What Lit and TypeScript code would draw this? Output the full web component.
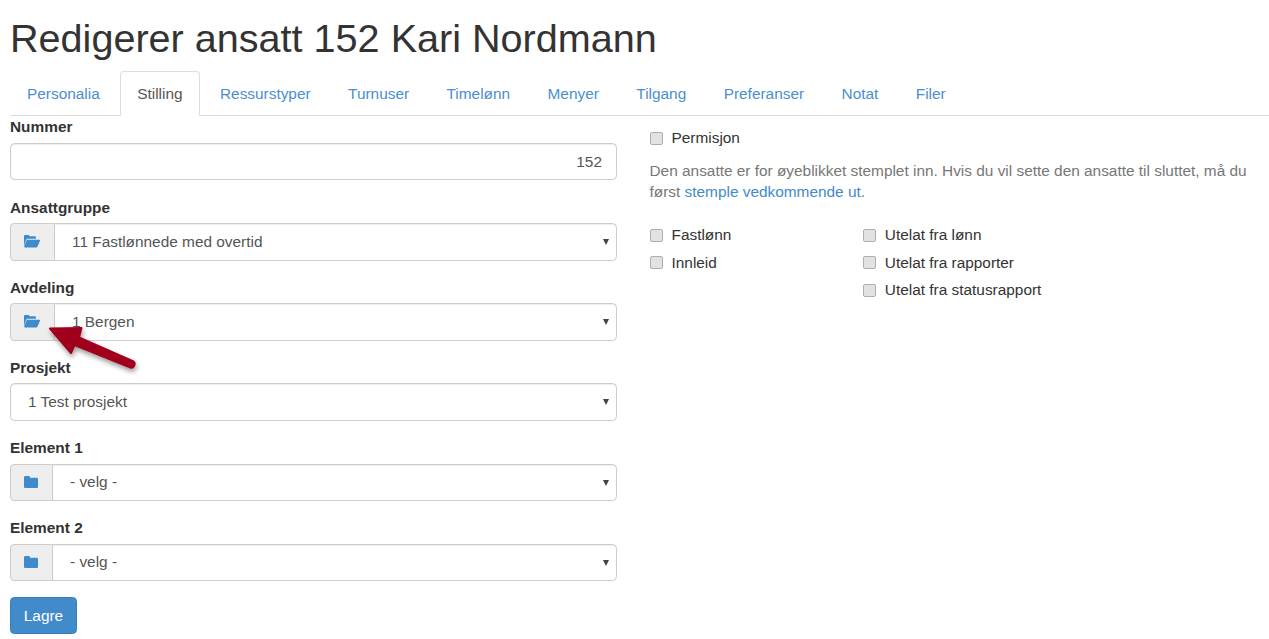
import { LitElement, html, css, svg } from "lit";
import { customElement } from "lit/decorators.js";

const openIcon = html`<svg class="ico open" viewBox="0 0 16 12.500" preserveAspectRatio="none"><path d="M0 10.6V1.2C0 .6.5.1 1.1.1h3.2c.6 0 1 .4 1.1 1h5.5c.6 0 1 .4 1 1V3.600H3.700C3 3.600 2.500 4 2.200 4.600zM3.500 4.600h11.800c.6 0 .9.5.7 1l-2.300 5.300c-.2.6-.7 1-1.300 1H.9c-.5 0-.8-.5-.6-1l2-5.200c.2-.6.7-1.100 1.200-1.100z"/></svg>`;
const closedIcon = html`<svg class="ico closed" viewBox="0 0 14 12"><path d="M1.300 0h3.400c.7 0 1.200.5 1.300 1.200l.1.500h6.600c.7 0 1.300.6 1.300 1.300v7.700c0 .7-.6 1.300-1.300 1.300H1.300C.6 12 0 11.400 0 10.700V1.300C0 .6.600 0 1.300 0z"/></svg>`;

@customElement("app-root")
export class AppRoot extends LitElement {
  static styles = css`
    :host { display: block; font-family: "Liberation Sans", Arial, sans-serif; font-size: 15.4px; line-height: 22px; color: #333; padding: 0 0 0 10px; position: relative; height: 639px; overflow: hidden; box-sizing: border-box; }
    * { box-sizing: border-box; }
    h1 { margin: 0; padding-top: 16px; height: 71px; font-size: 39.6px; line-height: 44px; font-weight: 400; }
    .tabs { display: flex; height: 45px; border-bottom: 1px solid #ddd; padding: 0; margin: 0; list-style: none; }
    .tab { padding: 11px 16px; height: 45px; color: #4a8fd0; margin-right: 3.450px; border: 1px solid transparent; border-radius: 4px 4px 0 0; white-space: nowrap; }
    .tab.active { color: #555; background: #fff; border-color: #ddd; border-bottom-color: #fff; }
    .cols { display: flex; }
    .left { width: 607px; flex: none; }
    .right { flex: 1; margin-left: 32.500px; padding-top: 11px; }
    label.f { display: block; font-weight: 700; line-height: 22px; margin-bottom: 4.500px; }
    .fg:first-child label.f { margin-bottom: 5px; }
    .fg { margin-bottom: 16.250px; }
    .ctl { display: block; width: 100%; height: 37.4px; border: 1px solid #ccc; border-radius: 4.400px; padding: 6px 14px; font: inherit; color: #555; background: #fff; box-shadow: inset 0 1px 1px rgba(0,0,0,.075); outline: none; }
    input.ctl { text-align: right; }
    select.ctl { appearance: none; -webkit-appearance: none; padding: 6px 24px 6px 17px; }
    .sw { position: relative; flex: 1; min-width: 0; }
    .sw::after { content: ""; position: absolute; right: 8px; top: 16px; border-style: solid; border-width: 6px 3px 0; border-color: #444 transparent transparent; }
    .ig { display: flex; }
    .addon { flex: none; display: flex; align-items: center; justify-content: center; height: 37.4px; padding-right: 1px; background: #eee; border: 1px solid #ccc; border-right: 0; border-radius: 4.400px 0 0 4.400px; }
    .addon.o { width: 44px; }
    .addon.c { width: 42px; }
    .ig .ctl { border-radius: 0 4.400px 4.400px 0; }
    .ico { fill: #428bca; display: block; }
    .ico.open { width: 16px; height: 13px; }
    .ico.closed { width: 14px; height: 12px; }
    .btn { display: block; height: 37px; width: 67px; font: inherit; color: #fff; background: #428bca; border: 1px solid #357ebd; border-radius: 4.400px; padding: 1px 0 0; }
    .ck { display: flex; align-items: center; height: 22px; margin: 0; font-weight: 400; }
    .ck input { appearance: none; -webkit-appearance: none; width: 13px; height: 13px; margin: 0 9px 0 0; flex: none; background: #e2e2e2; border: 1px solid #aeaeae; border-radius: 2px; }
    p { margin: 11px 0 0; color: #777; line-height: 21px; }
    a { color: #428bca; text-decoration: none; }
    .grid { display: flex; margin-top: 22px; }
    .gc { width: 213.300px; display: flex; flex-direction: column; gap: 5.700px; }
    .arrow { position: absolute; left: 40px; top: 320px; width: 105px; height: 60px; overflow: visible; }
  `;

  private field(name: string, value: string, icon?: "o" | "c") {
    const sel = html`<div class="sw"><select class="ctl"><option>${value}</option></select></div>`;
    return html`<div class="fg"><label class="f">${name}</label>
      ${icon
        ? html`<div class="ig"><span class="addon ${icon}">${icon === "o" ? openIcon : closedIcon}</span>${sel}</div>`
        : sel}</div>`;
  }

  private ck(t: string) {
    return html`<label class="ck"><input type="checkbox" />${t}</label>`;
  }

  render() {
    const tabs = ["Personalia", "Stilling", "Ressurstyper", "Turnuser", "Timelønn", "Menyer", "Tilgang", "Preferanser", "Notat", "Filer"];
    return html`
      <h1>Redigerer ansatt 152 Kari Nordmann</h1>
      <div class="tabs">${tabs.map((t) => html`<div class="tab ${t === "Stilling" ? "active" : ""}">${t}</div>`)}</div>
      <div class="cols">
        <div class="left">
          <div class="fg"><label class="f">Nummer</label><input class="ctl" value="152" /></div>
          ${this.field("Ansattgruppe", "11 Fastlønnede med overtid", "o")}
          ${this.field("Avdeling", "1 Bergen", "o")}
          ${this.field("Prosjekt", "1 Test prosjekt")}
          ${this.field("Element 1", "- velg -", "c")}
          ${this.field("Element 2", "- velg -", "c")}
          <button class="btn">Lagre</button>
        </div>
        <div class="right">
          ${this.ck("Permisjon")}
          <p>Den ansatte er for øyeblikket stemplet inn. Hvis du vil sette den ansatte til sluttet, må du først <a>stemple vedkommende ut</a>.</p>
          <div class="grid">
            <div class="gc">${this.ck("Fastlønn")}${this.ck("Innleid")}</div>
            <div class="gc">${this.ck("Utelat fra lønn")}${this.ck("Utelat fra rapporter")}${this.ck("Utelat fra statusrapport")}</div>
          </div>
        </div>
      </div>
      <svg class="arrow" viewBox="40 320 105 60">
        <defs><filter id="s" x="-20%" y="-30%" width="140%" height="170%"><feDropShadow dx="1" dy="3" stdDeviation="2.500" flood-color="#000" flood-opacity=".4"/></filter></defs>
        ${svg`<path filter="url(#s)" fill="#a0001c" stroke="#a0001c" stroke-width="2" stroke-linejoin="round" d="M50 328.500 L81.500 328 L79 337.500 L133.500 361.500 C136 363.500 134 368.500 130.500 367.500 L74.500 345 L71 353 Z"/>`}
      </svg>
    `;
  }
}
